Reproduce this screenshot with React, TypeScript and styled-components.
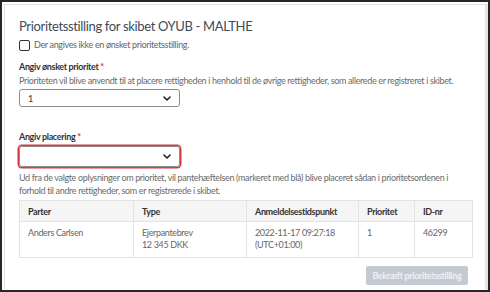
import React from "react";
import styled, { createGlobalStyle } from "styled-components";

const GlobalStyle = createGlobalStyle`
  html, body {
    margin: 0;
    padding: 0;
    background: #ffffff;
  }
  body {
    font-family: Lato, "Noto Sans", sans-serif;
  }
  * {
    box-sizing: border-box;
  }
`;

const rows = [
  {
    parter: "Anders Carlsen",
    type: ["Ejerpantebrev", "12 345 DKK"],
    tid: ["2022-11-17 09:27:18", "(UTC+01:00)"],
    prioritet: "1",
    id: "46299",
  },
];

const columns = [
  { title: "Parter", width: 114 },
  { title: "Type", width: 113 },
  { title: "Anmeldelsestidspunkt", width: 112 },
  { title: "Prioritet", width: 56 },
  { title: "ID-nr", width: 58 },
];

function Chevron() {
  return (
    <svg width="8" height="5" viewBox="0 0 8 5">
      <polyline
        points="1,1 4,4 7,1"
        fill="none"
        stroke="#222"
        strokeWidth="1.6"
        strokeLinecap="round"
        strokeLinejoin="round"
      />
    </svg>
  );
}

export default function App() {
  return (
    <>
      <GlobalStyle />
      <Frame>
        <Card>
          <Title>Prioritetsstilling for skibet OYUB - MALTHE</Title>
          <CheckRow>
            <CheckBox />
            <CheckLabel>Der angives ikke en ønsket prioritetsstilling.</CheckLabel>
          </CheckRow>

          <Label>
            Angiv ønsket prioritet <Required>*</Required>
          </Label>
          <Help>
            Prioriteten vil blive anvendt til at placere rettigheden i henhold til de
            øvrige rettigheder, som allerede er registreret i skibet.
          </Help>
          <Select>
            <span>1</span>
            <Chevron />
          </Select>

          <Label $gap={23}>
            Angiv placering <Required>*</Required>
          </Label>
          <Select $invalid>
            <span />
            <Chevron />
          </Select>
          <Help $multi>
            Ud fra de valgte oplysninger om prioritet, vil pantehæftelsen (markeret med
            blå) blive placeret sådan i prioritetsordenen i forhold til andre
            rettigheder, som er registrerede i skibet.
          </Help>

          <Table>
            <thead>
              <tr>
                {columns.map((c) => (
                  <Th key={c.title} style={{ width: c.width }}>
                    {c.title}
                  </Th>
                ))}
              </tr>
            </thead>
            <tbody>
              {rows.map((r) => (
                <tr key={r.id}>
                  <Td>{r.parter}</Td>
                  <Td>
                    {r.type[0]}
                    <br />
                    {r.type[1]}
                  </Td>
                  <Td>
                    {r.tid[0]}
                    <br />
                    {r.tid[1]}
                  </Td>
                  <Td>{r.prioritet}</Td>
                  <Td>{r.id}</Td>
                </tr>
              ))}
            </tbody>
          </Table>

          <Footer>
            <ConfirmButton disabled>Bekræft prioritetsstilling</ConfirmButton>
          </Footer>
        </Card>
      </Frame>
    </>
  );
}

const Frame = styled.div`
  width: 490px;
  height: 292px;
  border: 2px solid #262626;
  padding: 2px 2px 0 2px;
  display: flex;
  background: #ffffff;
  overflow: hidden;
`;

const Card = styled.div`
  flex: 1;
  margin-right: 1px;
  border: 1px solid #e2e2e2;
  border-bottom: none;
  box-shadow: 3px 0 0 #e6e6e6;
  padding: 12px 12px 0 14px;
  display: flex;
  flex-direction: column;
  letter-spacing: -0.35px;

  & > * {
    flex-shrink: 0;
  }
`;

const Title = styled.div`
  font-size: 13px;
  color: #414b58;
  line-height: 18px;
`;

const CheckRow = styled.div`
  display: flex;
  align-items: center;
  gap: 4px;
  margin-top: 3px;
`;

const CheckBox = styled.span`
  width: 11px;
  height: 11px;
  border: 1.5px solid #333;
  border-radius: 2px;
`;

const CheckLabel = styled.span`
  font-size: 9px;
  color: #666;
  line-height: 14px;
`;

const Label = styled.div<{ $gap?: number }>`
  font-size: 9px;
  font-weight: 700;
  color: #333;
  line-height: 13px;
  margin-top: ${(p) => p.$gap ?? 8}px;
`;

const Required = styled.span`
  color: #d0302f;
`;

const Help = styled.div<{ $multi?: boolean }>`
  font-size: 9px;
  color: #6b6b6b;
  line-height: 13px;
  margin-top: ${(p) => (p.$multi ? 4 : 1)}px;
  padding-right: ${(p) => (p.$multi ? 20 : 0)}px;
`;

const Select = styled.div<{ $invalid?: boolean }>`
  width: 161px;
  height: ${(p) => (p.$invalid ? 21 : 18)}px;
  margin-top: ${(p) => (p.$invalid ? 3 : 2)}px;
  border: 1px solid #8d8d8d;
  border-radius: 3px;
  padding: 0 8px 0 8px;
  display: flex;
  align-items: center;
  justify-content: space-between;
  font-size: 9px;
  color: #333;
  box-shadow: ${(p) => (p.$invalid ? "0 0 0 1.5px #d63a3a" : "none")};
`;

const Table = styled.table`
  width: 453px;
  margin-top: 3px;
  border-collapse: collapse;
  table-layout: fixed;
  border: 1px solid #e3e3e3;
`;

const Th = styled.th`
  background: #f5f5f5;
  text-align: left;
  font-size: 9px;
  font-weight: 700;
  color: #333;
  height: 21px;
  padding: 0 8px;
  border: 1px solid #e3e3e3;
`;

const Td = styled.td`
  vertical-align: top;
  font-size: 9px;
  color: #666;
  line-height: 12px;
  padding: 5px 8px 6px 8px;
  border: 1px solid #e3e3e3;
`;

const Footer = styled.div`
  display: flex;
  justify-content: flex-end;
  margin-top: 8px;
  padding-right: 5px;
`;

const ConfirmButton = styled.button`
  height: 19px;
  width: 102px;
  border: none;
  border-radius: 2px;
  background: #c4cad3;
  color: #eef1f5;
  font-family: Lato, "Noto Sans", sans-serif;
  font-size: 9px;
  font-weight: 700;
  letter-spacing: -0.35px;
  white-space: nowrap;
  padding: 0;
`;
